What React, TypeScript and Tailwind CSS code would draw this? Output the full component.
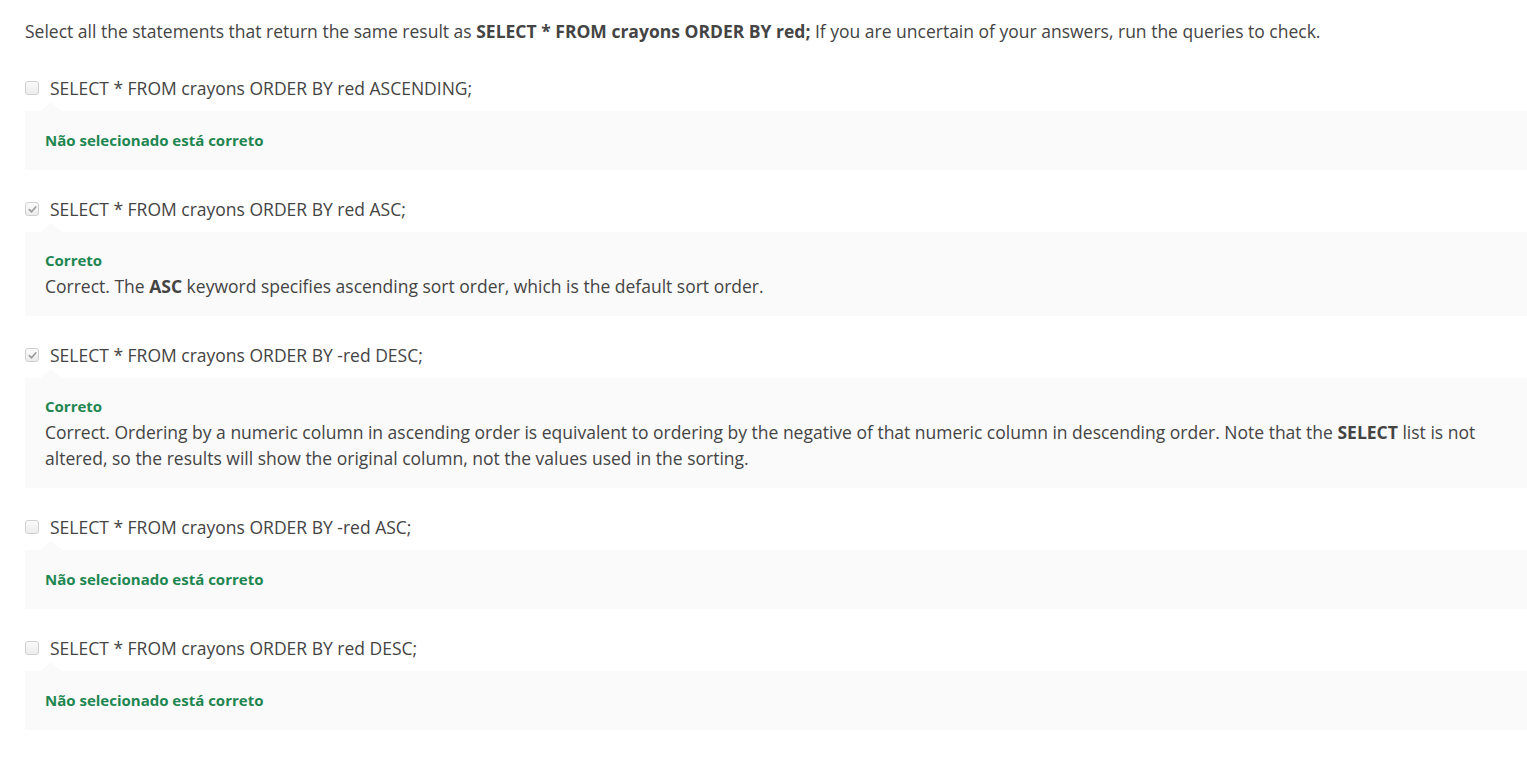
const options = [
  { text: "SELECT * FROM crayons ORDER BY red ASCENDING;", checked: false },
  {
    text: "SELECT * FROM crayons ORDER BY red ASC;",
    checked: true,
    feedback: (
      <>
        Correct. The <strong className="font-bold">ASC</strong> keyword specifies ascending sort order, which is the default
        sort order.
      </>
    ),
  },
  {
    text: "SELECT * FROM crayons ORDER BY -red DESC;",
    checked: true,
    feedback: (
      <>
        Correct. Ordering by a numeric column in ascending order is equivalent to ordering by the negative of that numeric
        column in descending order. Note that the <strong className="font-bold">SELECT</strong> list is not altered, so the
        results will show the original column, not the values used in the sorting.
      </>
    ),
  },
  { text: "SELECT * FROM crayons ORDER BY -red ASC;", checked: false },
  { text: "SELECT * FROM crayons ORDER BY red DESC;", checked: false },
];

function Checkbox({ checked }: { checked: boolean }) {
  return (
    <span className="flex h-[14px] w-[14px] shrink-0 items-center justify-center rounded-[3px] border border-[#cfcfcf] bg-gradient-to-b from-[#fbfbfb] to-[#ececec]">
      {checked && (
        <svg viewBox="0 0 10 10" className="h-[9px] w-[9px]">
          <path d="M1.5 5.2 L4 7.6 L8.6 2.2" fill="none" stroke="#9a9a9a" strokeWidth="1.8" strokeLinecap="round" strokeLinejoin="round" />
        </svg>
      )}
    </span>
  );
}

export default function App() {
  return (
    <div
      className="min-h-screen bg-white pl-[25px] pt-[19px] text-[17.5px] text-[#444]"
      style={{ fontFamily: '"Open Sans", "Noto Sans", sans-serif' }}
    >
      <p className="leading-6">
        Select all the statements that return the same result as{" "}
        <strong className="font-bold">SELECT * FROM crayons ORDER BY red;</strong> If you are uncertain of your answers, run
        the queries to check.
      </p>

      <div className="mt-[33px] flex flex-col gap-[27px]">
        {options.map((opt) => (
          <div key={opt.text}>
            {/* Option row */}
            <div className="flex items-center leading-6">
              <Checkbox checked={opt.checked} />
              <span className="ml-[11px]">{opt.text}</span>
            </div>

            {/* Feedback panel */}
            <div className="relative mt-[11px] bg-[#fafafa] px-5 pt-[18px] pb-[17px]">
              <div className="absolute -top-[9px] left-[15px] h-0 w-0 border-x-[11px] border-b-[9px] border-x-transparent border-b-[#fafafa]" />
              {opt.feedback ? (
                <>
                  <div className="text-[15px] font-bold leading-5 text-[#1e8650]">Correto</div>
                  <div className="mt-[3px] leading-[26px]">{opt.feedback}</div>
                </>
              ) : (
                <div className="pt-px pb-[3px] text-[15px] font-bold leading-5 text-[#1e8650]">
                  Não selecionado está correto
                </div>
              )}
            </div>
          </div>
        ))}
      </div>
    </div>
  );
}
